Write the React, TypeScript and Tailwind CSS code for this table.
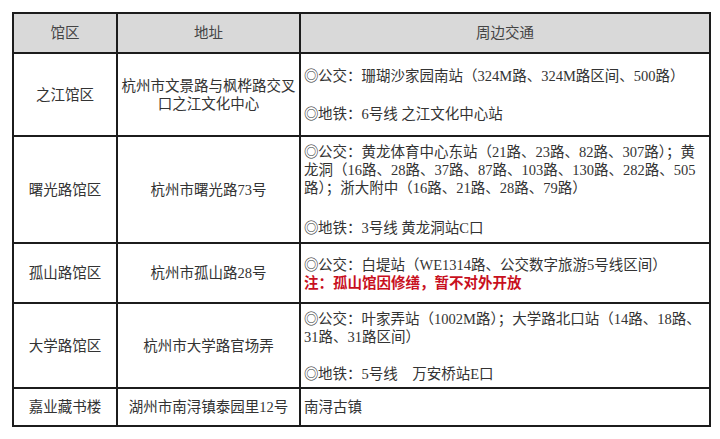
import React from "react";

interface Row {
  name: string;
  address: React.ReactNode;
  traffic: React.ReactNode;
  height: string;
}

const Line = ({ children }: { children: React.ReactNode }) => (
  <div className="whitespace-pre">{children}</div>
);

// ◎ is full width in the original document
const Mark = () => (
  <span className="inline-block w-[14px] text-center font-['Noto_Sans_CJK_SC']">◎</span>
);

const rows: Row[] = [
  {
    name: "之江馆区",
    address: (
      <>
        <Line>杭州市文景路与枫桦路交叉</Line>
        <Line>口之江文化中心</Line>
      </>
    ),
    traffic: (
      <>
        <Line><Mark />公交：珊瑚沙家园南站（324M路、324M路区间、500路）</Line>
        <div className="h-[19px]" />
        <Line><Mark />地铁：6号线 之江文化中心站</Line>
      </>
    ),
    height: "h-[83px]",
  },
  {
    name: "曙光路馆区",
    address: <Line>杭州市曙光路73号</Line>,
    traffic: (
      <>
        <Line><Mark />公交：黄龙体育中心东站（21路、23路、82路、307路）；黄</Line>
        <Line>龙洞（16路、28路、37路、87路、103路、130路、282路、505</Line>
        <Line>路）；浙大附中（16路、21路、28路、79路）</Line>
        <div className="h-[21px]" />
        <Line><Mark />地铁：3号线 黄龙洞站C口</Line>
      </>
    ),
    height: "h-[107px]",
  },
  {
    name: "孤山路馆区",
    address: <Line>杭州市孤山路28号</Line>,
    traffic: (
      <>
        <Line><Mark />公交：白堤站（WE1314路、公交数字旅游5号线区间）</Line>
        <Line>
          <span className="font-bold text-[#c8101e]">注：孤山馆因修缮，暂不对外开放</span>
        </Line>
      </>
    ),
    height: "h-[60px]",
  },
  {
    name: "大学路馆区",
    address: <Line>杭州市大学路官场弄</Line>,
    traffic: (
      <>
        <Line><Mark />公交：叶家弄站（1002M路）；大学路北口站（14路、18路、</Line>
        <Line>31路、31路区间）</Line>
        <div className="h-[18px]" />
        <Line><Mark />地铁：5号线　万安桥站E口</Line>
      </>
    ),
    height: "h-[85px]",
  },
  {
    name: "嘉业藏书楼",
    address: <Line>湖州市南浔镇泰园里12号</Line>,
    traffic: <Line>南浔古镇</Line>,
    height: "h-[38px]",
  },
];

export default function App() {
  return (
    <div className="w-[720px] h-[439px] bg-white pt-[12px] pl-[12px] text-[14.5px] leading-[18px] text-[#333] font-['Liberation_Serif','Noto_Sans_CJK_SC',serif]">
      <table className="table-fixed border-collapse w-[697px]">
        <colgroup>
          <col className="w-[104px]" />
          <col className="w-[183px]" />
          <col className="w-[410px]" />
        </colgroup>
        <thead>
          <tr className="h-[40px] bg-[#d9d9d9] text-[#444]">
            <th className="border-2 border-[#1c1c1c] font-normal text-center">馆区</th>
            <th className="border-2 border-[#1c1c1c] font-normal text-center">地址</th>
            <th className="border-2 border-[#1c1c1c] font-normal text-center">周边交通</th>
          </tr>
        </thead>
        <tbody>
          {rows.map((row) => (
            <tr key={row.name} className={row.height}>
              <td className="border-2 border-[#1c1c1c] text-center align-middle">{row.name}</td>
              <td className="border-2 border-[#1c1c1c] text-center align-middle">{row.address}</td>
              <td className="border-2 border-[#1c1c1c] text-left align-middle pl-[3px]">{row.traffic}</td>
            </tr>
          ))}
        </tbody>
      </table>
    </div>
  );
}
